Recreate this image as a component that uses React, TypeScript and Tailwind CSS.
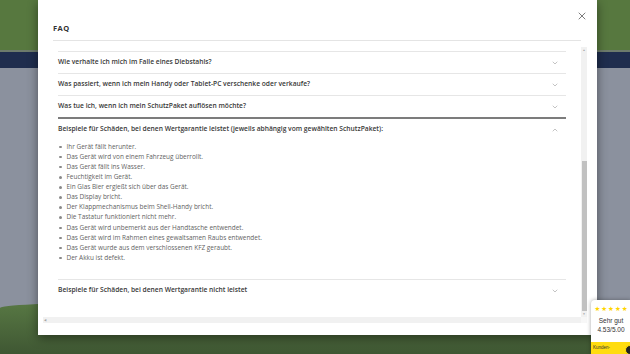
import React from 'react';
import { ChevronDown, ChevronUp, X } from 'lucide-react';

const questions = [
    'Wie verhalte ich mich im Falle eines Diebstahls?',
    'Was passiert, wenn ich mein Handy oder Tablet-PC verschenke oder verkaufe?',
    'Was tue ich, wenn ich mein SchutzPaket auflösen möchte?',
];

const damages = [
    'Ihr Gerät fällt herunter.',
    'Das Gerät wird von einem Fahrzeug überrollt.',
    'Das Gerät fällt ins Wasser.',
    'Feuchtigkeit im Gerät.',
    'Ein Glas Bier ergießt sich über das Gerät.',
    'Das Display bricht.',
    'Der Klappmechanismus beim Shell-Handy bricht.',
    'Die Tastatur funktioniert nicht mehr.',
    'Das Gerät wird unbemerkt aus der Handtasche entwendet.',
    'Das Gerät wird im Rahmen eines gewaltsamen Raubs entwendet.',
    'Das Gerät wurde aus dem verschlossenen KFZ geraubt.',
    'Der Akku ist defekt.',
];

const ItemHeader: React.FC<{ label: string; open?: boolean }> = ({ label, open = false }) => (
    <div className="h-[21px] flex items-center justify-between pr-[7px]">
        <span className="text-[6.7px] font-semibold text-[#383838] leading-none">{label}</span>
        {open ? (
            <ChevronUp size={8} strokeWidth={1.5} className="text-[#888]" />
        ) : (
            <ChevronDown size={8} strokeWidth={1.5} className="text-[#888]" />
        )}
    </div>
);

const TrustBadge: React.FC = () => (
    <div className="absolute left-[591px] top-[300px] w-[40px] h-[54px] bg-white rounded-tl-[4px] shadow-[0_0_4px_rgba(0,0,0,0.35)] flex flex-col items-center overflow-hidden">
        <div className="mt-[6px] flex gap-[1px] text-[6.5px] leading-none text-[#ffd500] font-['DejaVu_Sans',sans-serif]">
            <span>★</span><span>★</span><span>★</span><span>★</span><span>★</span>
        </div>
        <div className="mt-[3px] text-[6.5px] leading-[10px] text-[#333] font-['Liberation_Sans',sans-serif]">Sehr gut</div>
        <div className="text-[6.5px] leading-[8px] text-[#333] font-['Liberation_Sans',sans-serif]">4.53/5.00</div>
        <div className="mt-auto w-full h-[12px] bg-[#ffdc0f] flex items-center justify-between pl-[2px]">
            <span className="text-[4.5px] text-[#333] font-['Liberation_Sans',sans-serif]">Kunden-</span>
            <span className="w-[10px] h-[10px] -mr-[4px] mt-[3px] rounded-full bg-[#222] border-[1.5px] border-[#ffdc0f]" />
        </div>
    </div>
);

export default function App() {
    return (
        <div className="relative w-[630px] h-[354px] overflow-hidden bg-[#8b919e] font-['Open_Sans',sans-serif]">
            {/* dimmed page behind the dialog */}
            <div className="flex flex-col h-full">
                <div className="h-[50px] bg-[#57783f]" />
                <div className="h-[2px] bg-[#6d7b6c]" />
                <div className="h-[16px] bg-[#1f2d4e]" />
                <div className="flex-1" />
                <div className="h-[56px] rounded-tl-[70%_10px] rounded-tr-[30%_6px] bg-gradient-to-b from-[#5a7b45] to-[#3f5733]" />
            </div>

            {/* dialog */}
            <div className="absolute left-[38px] top-0 w-[559px] h-[335px] bg-white shadow-[0_3px_10px_rgba(0,0,0,0.45)] flex flex-col">
                <div className="h-[41px] mx-[15px] mr-[16px] pt-[23px] border-b border-[#e4e4e4]">
                    <h2 className="text-[7.5px] font-bold tracking-[0.5px] text-[#333] leading-[10px]">FAQ</h2>
                </div>
                <button className="absolute right-[9px] top-[10px] text-[#444]">
                    <X size={12} strokeWidth={1.4} />
                </button>

                <div className="mt-[6px] ml-[5px] mr-[10px] h-[276px] flex flex-col">
                    <div className="flex flex-1 min-h-0">
                        <div className="flex-1 overflow-hidden pl-[15px] pr-[15px] pt-[4px]">
                            {questions.map((q) => (
                                <div key={q} className="border-t border-[#e6e6e6]">
                                    <ItemHeader label={q} />
                                </div>
                            ))}
                            <div className="border-t-2 border-[#7c7c7c]">
                                <ItemHeader
                                    label="Beispiele für Schäden, bei denen Wertgarantie leistet (jeweils abhängig vom gewählten SchutzPaket):"
                                    open
                                />
                                <ul className="mt-[2px] pb-[16px]">
                                    {damages.map((d) => (
                                        <li key={d} className="flex items-center h-[10.1px] pl-[1px]">
                                            <span className="w-[2.5px] h-[2.5px] rounded-full bg-[#888]" />
                                            <span className="ml-[5px] text-[6.45px] text-[#5f5f5f] leading-none">{d}</span>
                                        </li>
                                    ))}
                                </ul>
                            </div>
                            <div className="border-t border-[#e6e6e6]">
                                <ItemHeader label="Beispiele für Schäden, bei denen Wertgarantie nicht leistet" />
                            </div>
                        </div>
                        {/* vertical scrollbar */}
                        <div className="w-[6px] bg-[#f1f1f1] flex flex-col items-center">
                            <div className="h-[6px] flex items-center justify-center text-[3px] text-[#a3a3a3] leading-none">▲</div>
                            <div className="mt-[108px] w-[5px] h-[150px] bg-[#c1c1c1]" />
                            <div className="mt-auto h-[6px] flex items-center justify-center text-[3px] text-[#a3a3a3] leading-none">▼</div>
                        </div>
                    </div>
                    {/* horizontal scrollbar */}
                    <div className="h-[6px] flex">
                        <div className="flex-1 bg-[#f1f1f1] flex items-center pl-[1px] text-[3px] text-[#a3a3a3] leading-none">◀</div>
                        <div className="w-[6px] bg-[#f7f7f7]" />
                    </div>
                </div>
            </div>

            <TrustBadge />
        </div>
    );
}
